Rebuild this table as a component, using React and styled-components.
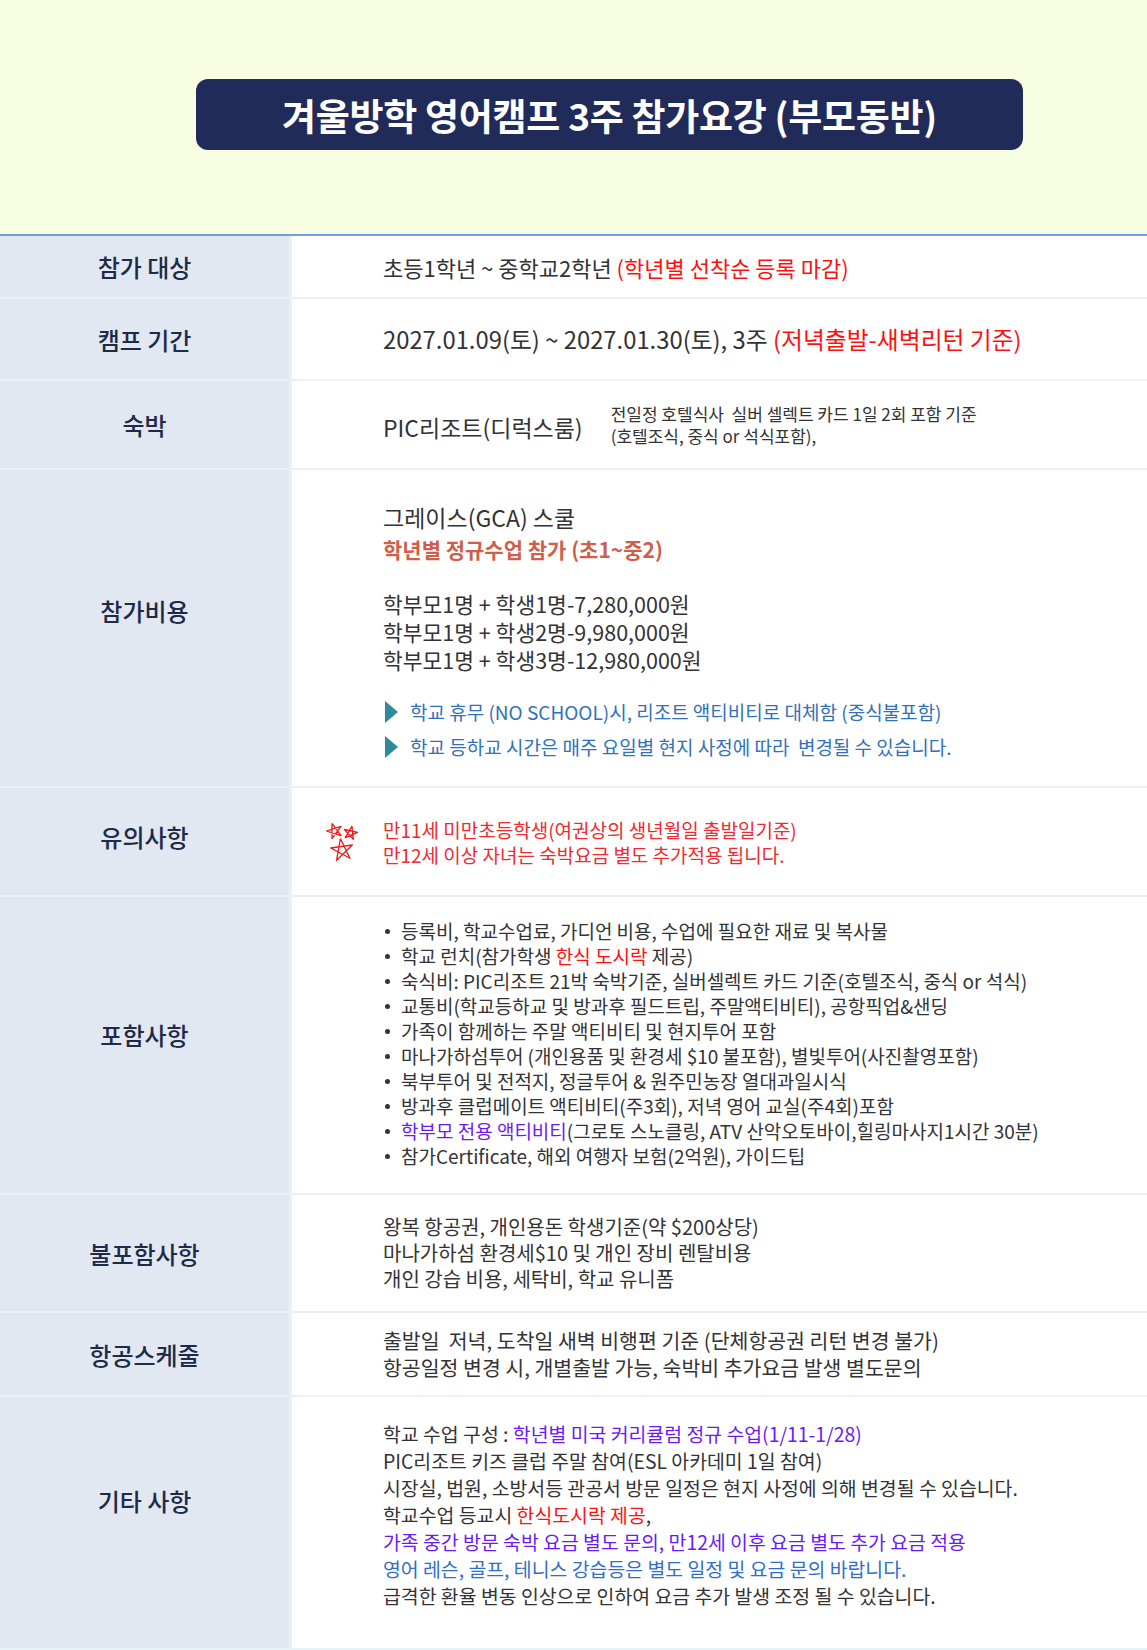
import styled, { createGlobalStyle } from "styled-components";

const GlobalStyle = createGlobalStyle`
	* { box-sizing: border-box; }
	body {
		margin: 0;
		background: #ffffff;
		font-family: "Noto Sans CJK KR", "Noto Sans", sans-serif;
		color: #333333;
	}
`;

const Page = styled.div`
	width: 1147px;
	height: 1650px;
	overflow: hidden;
`;

const Header = styled.div`
	height: 236px;
	background: #f7fee1;
	padding: 79px 0 0 196px;
	border-bottom: 2px solid #6a9fe8;
`;

const TitleBox = styled.div`
	width: 827px;
	height: 71px;
	border-radius: 12px;
	background: #212b5a;
	display: flex;
	align-items: center;
	justify-content: center;
	color: #ffffff;
	font-size: 37px;
	font-weight: 700;
	letter-spacing: -0.3px;
`;

const Row = styled.div`
	display: grid;
	grid-template-columns: 292px 1fr;
	height: ${(props) => props.h}px;
	border-bottom: 2px solid #e8f1f5;
`;

const Label = styled.div`
	background: #e1e8f1;
	border-right: 3px solid #ebf2f6;
	display: flex;
	align-items: center;
	justify-content: center;
	font-size: 24px;
	font-weight: 500;
	color: #1e2a47;
	padding-bottom: ${(props) => props.lift || 0}px;
`;

const Content = styled.div`
	display: flex;
	flex-direction: column;
	justify-content: center;
	padding-left: 91px;
	padding-top: ${(props) => props.drop || 0}px;
	padding-bottom: ${(props) => props.lift || 0}px;
	font-size: ${(props) => props.size || 22}px;
	line-height: ${(props) => props.lh || 28}px;
	color: #333333;
`;

const Red = styled.span`
	color: #ff1010;
`;

const Purple = styled.span`
	color: #6a1bf5;
`;

const Blue = styled.span`
	color: #2f6fc9;
`;

const Stay = styled.div`
	display: flex;
	align-items: center;
	gap: 28px;
`;

const StayMain = styled.span`
	font-size: 23px;
	padding-top: 4px;
`;

const StayNote = styled.div`
	font-size: 17px;
	line-height: 22px;
`;

const School = styled.div`
	font-size: 23px;
	line-height: 33px;
`;

const Sub = styled.div`
	font-size: 21px;
	line-height: 31px;
	font-weight: 700;
	color: #cf5f4c;
	margin-bottom: 25px;
`;

const Price = styled.div`
	font-size: 21.5px;
`;

const Notes = styled.div`
	margin-top: 24px;
	display: flex;
	flex-direction: column;
	gap: 7px;
`;

const Note = styled.div`
	display: flex;
	align-items: center;
	gap: 12px;
	font-size: 19px;
	color: #3171b9;
	&::before {
		content: "";
		width: 0;
		height: 0;
		margin-left: 2px;
		border-top: 11px solid transparent;
		border-bottom: 11px solid transparent;
		border-left: 13px solid #2f8a9e;
	}
`;

const Warn = styled.div`
	display: flex;
	align-items: center;
	gap: 24px;
	margin-left: -58px;
`;

const WarnText = styled.div`
	font-size: 19px;
	line-height: 25px;
	color: #f02a30;
`;

const List = styled.ul`
	margin: 0;
	padding: 0;
	list-style: none;
	font-size: 19px;
	line-height: 25px;
`;

const Item = styled.li`
	display: flex;
	align-items: center;
	&::before {
		content: "";
		width: 5px;
		height: 5px;
		border-radius: 50%;
		background: #333333;
		margin: 2px 11px 0 2px;
		flex-shrink: 0;
	}
`;

const starPoints = (cx, cy, r, rot) =>
	[0, 2, 4, 1, 3, 0]
		.map((k) => {
			const a = ((-90 + 72 * k + rot) * Math.PI) / 180;
			return `${(cx + r * Math.cos(a)).toFixed(1)},${(cy + r * Math.sin(a)).toFixed(1)}`;
		})
		.join(" ");

const Stars = () => (
	<svg width="34" height="44" viewBox="0 0 34 44">
		<g fill="none" stroke="#f01818" strokeWidth="1.3" strokeLinejoin="round">
			<polyline points={starPoints(9.5, 11, 8, -18)} />
			<polyline points={starPoints(25.5, 13, 7, 12)} />
			<polyline points={starPoints(17, 30, 11.5, -8)} />
		</g>
	</svg>
);

const App = () => {
	return (
		<>
			<GlobalStyle />
			<Page>
				<Header>
					<TitleBox>겨울방학 영어캠프 3주 참가요강 (부모동반)</TitleBox>
				</Header>

				<Row h={63}>
					<Label>참가 대상</Label>
					<Content>
						<div>
							초등1학년 ~ 중학교2학년 <Red>(학년별 선착순 등록 마감)</Red>
						</div>
					</Content>
				</Row>

				<Row h={82}>
					<Label>캠프 기간</Label>
					<Content size={23.8}>
						<div>
							2027.01.09(토) ~ 2027.01.30(토), 3주{" "}
							<Red>(저녁출발-새벽리턴 기준)</Red>
						</div>
					</Content>
				</Row>

				<Row h={89}>
					<Label>숙박</Label>
					<Content>
						<Stay>
							<StayMain>PIC리조트(디럭스룸)</StayMain>
							<StayNote>
								전일정 호텔식사&nbsp; 실버 셀렉트 카드 1일 2회 포함 기준
								<br />
								(호텔조식, 중식 or 석식포함),
							</StayNote>
						</Stay>
					</Content>
				</Row>

				<Row h={318}>
					<Label lift={36}>참가비용</Label>
					<Content drop={6}>
						<School>그레이스(GCA) 스쿨</School>
						<Sub>학년별 정규수업 참가 (초1~중2)</Sub>
						<Price>학부모1명 + 학생1명-7,280,000원</Price>
						<Price>학부모1명 + 학생2명-9,980,000원</Price>
						<Price>학부모1명 + 학생3명-12,980,000원</Price>
						<Notes>
							<Note>학교 휴무 (NO SCHOOL)시, 리조트 액티비티로 대체함 (중식불포함)</Note>
							<Note>학교 등하교 시간은 매주 요일별 현지 사정에 따라&nbsp; 변경될 수 있습니다.</Note>
						</Notes>
					</Content>
				</Row>

				<Row h={109}>
					<Label lift={10}>유의사항</Label>
					<Content>
						<Warn>
							<Stars />
							<WarnText>
								만11세 미만초등학생(여권상의 생년월일 출발일기준)
								<br />
								만12세 이상 자녀는 숙박요금 별도 추가적용 됩니다.
							</WarnText>
						</Warn>
					</Content>
				</Row>

				<Row h={298}>
					<Label lift={22}>포함사항</Label>
					<Content lift={4}>
						<List>
							<Item>등록비, 학교수업료, 가디언 비용, 수업에 필요한 재료 및 복사물</Item>
							<Item>
								<span>
									학교 런치(참가학생 <Red>한식 도시락</Red> 제공)
								</span>
							</Item>
							<Item>숙식비: PIC리조트 21박 숙박기준, 실버셀렉트 카드 기준(호텔조식, 중식 or 석식)</Item>
							<Item>교통비(학교등하교 및 방과후 필드트립, 주말액티비티), 공항픽업&샌딩</Item>
							<Item>가족이 함께하는 주말 액티비티 및 현지투어 포함</Item>
							<Item>마나가하섬투어 (개인용품 및 환경세 $10 불포함), 별빛투어(사진촬영포함)</Item>
							<Item>북부투어 및 전적지, 정글투어 & 원주민농장 열대과일시식</Item>
							<Item>방과후 클럽메이트 액티비티(주3회), 저녁 영어 교실(주4회)포함</Item>
							<Item>
								<span>
									<Purple>학부모 전용 액티비티</Purple>(그로토 스노클링, ATV 산악오토바이,힐링마사지1시간 30분)
								</span>
							</Item>
							<Item>참가Certificate, 해외 여행자 보험(2억원), 가이드팁</Item>
						</List>
					</Content>
				</Row>

				<Row h={118}>
					<Label>불포함사항</Label>
					<Content size={20} lh={26}>
						<div>왕복 항공권, 개인용돈 학생기준(약 $200상당)</div>
						<div>마나가하섬 환경세$10 및 개인 장비 렌탈비용</div>
						<div>개인 강습 비용, 세탁비, 학교 유니폼</div>
					</Content>
				</Row>

				<Row h={84}>
					<Label>항공스케줄</Label>
					<Content size={20.5} lh={27}>
						<div>출발일&nbsp; 저녁, 도착일 새벽 비행편 기준 (단체항공권 리턴 변경 불가)</div>
						<div>항공일정 변경 시, 개별출발 가능, 숙박비 추가요금 발생 별도문의</div>
					</Content>
				</Row>

				<Row h={253}>
					<Label lift={45}>기타 사항</Label>
					<Content size={19.4} lh={27} lift={16}>
						<div>
							학교 수업 구성 : <Purple>학년별 미국 커리큘럼 정규 수업(1/11-1/28)</Purple>
						</div>
						<div>PIC리조트 키즈 클럽 주말 참여(ESL 아카데미 1일 참여)</div>
						<div>시장실, 법원, 소방서등 관공서 방문 일정은 현지 사정에 의해 변경될 수 있습니다.</div>
						<div>
							학교수업 등교시 <Red>한식도시락 제공</Red>,
						</div>
						<div>
							<Purple>가족 중간 방문 숙박 요금 별도 문의, 만12세 이후 요금 별도 추가 요금 적용</Purple>
						</div>
						<div>
							<Blue>영어 레슨, 골프, 테니스 강습등은 별도 일정 및 요금 문의 바랍니다.</Blue>
						</div>
						<div>급격한 환율 변동 인상으로 인하여 요금 추가 발생 조정 될 수 있습니다.</div>
					</Content>
				</Row>
			</Page>
		</>
	);
};

export default App;
